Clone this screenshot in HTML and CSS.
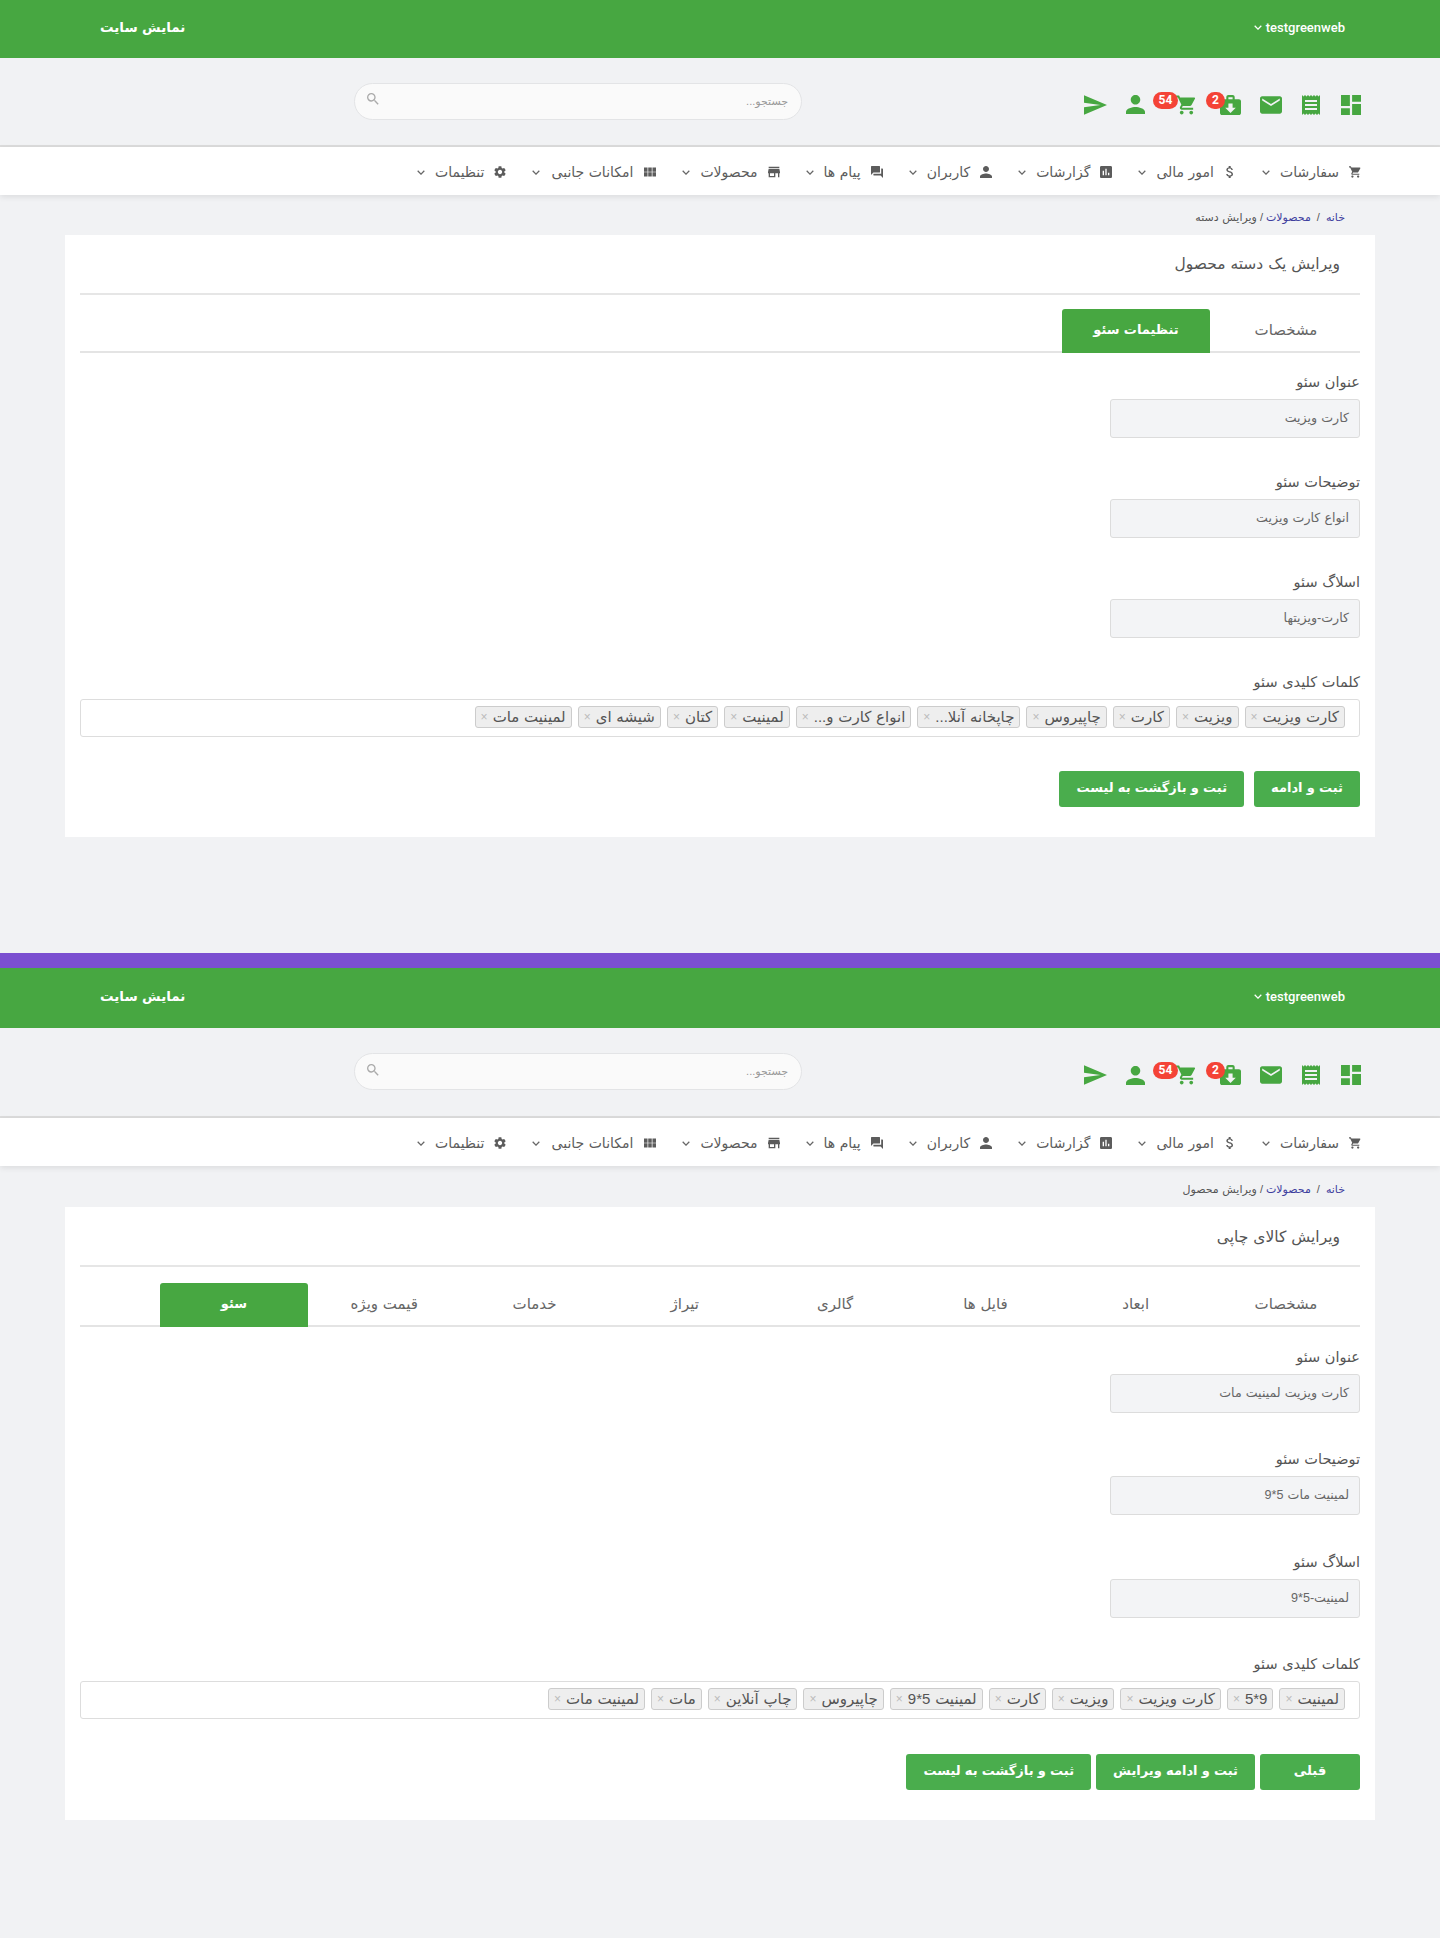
FILE: index.html
```html
<!DOCTYPE html>
<html lang="fa" dir="rtl">
<head>
  <meta charset="UTF-8" />
  <title>ویرایش محصول</title>
  <link rel="stylesheet" href="styles.css">
</head>
<body>
  <svg class="sprite" xmlns="http://www.w3.org/2000/svg">
    <symbol id="i-dashboard" viewBox="3 3 18 18"><path d="M3 13h8V3H3v10zm0 8h8v-6H3v6zm10 0h8V11h-8v10zm0-18v6h8V3h-8z"/></symbol>
    <symbol id="i-receipt" viewBox="3 2 18 20"><path d="M18 17H6v-2h12v2zm0-4H6v-2h12v2zm0-4H6V7h12v2zM3 22l1.5-1.5L6 22l1.5-1.5L9 22l1.5-1.5L12 22l1.5-1.5L15 22l1.5-1.5L18 22l1.5-1.5L21 22V2l-1.5 1.5L18 2l-1.5 1.5L15 2l-1.5 1.5L12 2l-1.5 1.5L9 2 7.5 3.5 6 2 4.5 3.5 3 2v20z"/></symbol>
    <symbol id="i-email" viewBox="2 4 20 16"><path d="M20 4H4c-1.1 0-1.99.9-1.99 2L2 18c0 1.1.9 2 2 2h16c1.1 0 2-.9 2-2V6c0-1.1-.9-2-2-2zm0 4l-8 5-8-5V6l8 5 8-5v2z"/></symbol>
    <symbol id="i-shop" viewBox="2 2 20 19"><path fill-rule="evenodd" d="M20 6h-4V4c0-1.1-.9-2-2-2h-4C8.9 2 8 2.9 8 4v2H4c-1.1 0-2 .9-2 2v11c0 1.1.9 2 2 2h16c1.1 0 2-.9 2-2V8c0-1.1-.9-2-2-2zM10 4h4v2h-4V4zm2 15l-5-5h3v-4h4v4h3l-5 5z"/></symbol>
    <symbol id="i-cart" viewBox="1 2 21 20"><path d="M7 18c-1.1 0-1.99.9-1.99 2S5.9 22 7 22s2-.9 2-2-.9-2-2-2zM1 2v2h2l3.6 7.59-1.35 2.45c-.16.28-.25.61-.25.96 0 1.1.9 2 2 2h12v-2H7.42c-.14 0-.25-.11-.25-.25l.03-.12.9-1.63h7.45c.75 0 1.41-.41 1.75-1.03l3.58-6.49c.08-.14.12-.31.12-.48 0-.55-.45-1-1-1H5.21l-.94-2H1zm16 16c-1.1 0-1.99.9-1.99 2s.89 2 1.99 2 2-.9 2-2-.9-2-2-2z"/></symbol>
    <symbol id="i-person" viewBox="4 4 16 16"><path d="M12 12c2.21 0 4-1.79 4-4s-1.79-4-4-4-4 1.79-4 4 1.79 4 4 4zm0 2c-2.67 0-8 1.34-8 4v2h16v-2c0-2.66-5.33-4-8-4z"/></symbol>
    <symbol id="i-send" viewBox="2 3 21 18"><path d="M2.01 21L23 12 2.01 3 2 10l15 2-15 2z"/></symbol>
    <symbol id="i-money" viewBox="6 3 12 18"><path d="M11.8 10.9c-2.27-.59-3-1.2-3-2.15 0-1.09 1.01-1.85 2.7-1.85 1.78 0 2.44.85 2.5 2.1h2.21c-.07-1.72-1.12-3.3-3.21-3.81V3h-3v2.16c-1.94.42-3.5 1.68-3.5 3.61 0 2.31 1.91 3.46 4.7 4.13 2.5.6 3 1.48 3 2.41 0 .69-.49 1.79-2.7 1.79-2.06 0-2.87-.92-2.98-2.1h-2.2c.12 2.19 1.76 3.42 3.68 3.83V21h3v-2.15c1.95-.37 3.5-1.5 3.5-3.55 0-2.84-2.43-3.81-4.7-4.4z"/></symbol>
    <symbol id="i-chart" viewBox="3 3 18 18"><path d="M19 3H5c-1.1 0-2 .9-2 2v14c0 1.1.9 2 2 2h14c1.1 0 2-.9 2-2V5c0-1.1-.9-2-2-2zM9 17H7v-7h2v7zm4 0h-2V7h2v10zm4 0h-2v-4h2v4z"/></symbol>
    <symbol id="i-forum" viewBox="2 2 20 20"><path d="M21 6h-2v9H6v2c0 .55.45 1 1 1h11l4 4V7c0-.55-.45-1-1-1zm-4 6V3c0-.55-.45-1-1-1H3c-.55 0-1 .45-1 1v14l4-4h10c.55 0 1-.45 1-1z"/></symbol>
    <symbol id="i-store" viewBox="3 4 18 16"><path d="M20 4H4v2h16V4zm1 10v-2l-1-5H4l-1 5v2h1v6h10v-6h4v6h2v-6h1zm-9 4H6v-4h6v4z"/></symbol>
    <symbol id="i-apps" viewBox="4 5 17 13"><path d="M4 11h5V5H4v6zm0 7h5v-6H4v6zm6 0h5v-6h-5v6zm6 0h5v-6h-5v6zm-6-7h5V5h-5v6zm6-6v6h5V5h-5z"/></symbol>
    <symbol id="i-gear" viewBox="2.5 2 19 20"><path d="M19.14 12.94c.04-.3.06-.61.06-.94 0-.32-.02-.64-.07-.94l2.03-1.58a.49.49 0 00.12-.61l-1.92-3.32a.488.488 0 00-.59-.22l-2.39.96c-.5-.38-1.03-.7-1.62-.94l-.36-2.54a.484.484 0 00-.48-.41h-3.84c-.24 0-.43.17-.47.41l-.36 2.54c-.59.24-1.13.57-1.62.94l-2.39-.96c-.22-.08-.47 0-.59.22L2.74 8.87c-.12.21-.08.47.12.61l2.03 1.58c-.05.3-.09.63-.09.94s.02.64.07.94l-2.03 1.58a.49.49 0 00-.12.61l1.92 3.32c.12.22.37.29.59.22l2.39-.96c.5.38 1.03.7 1.62.94l.36 2.54c.05.24.24.41.48.41h3.84c.24 0 .44-.17.47-.41l.36-2.54c.59-.24 1.13-.56 1.62-.94l2.39.96c.22.08.47 0 .59-.22l1.92-3.32c.12-.22.07-.47-.12-.61l-2.01-1.58zM12 15.6c-1.98 0-3.6-1.62-3.6-3.6s1.62-3.6 3.6-3.6 3.6 1.62 3.6 3.6-1.62 3.6-3.6 3.6z"/></symbol>
    <symbol id="i-search" viewBox="3 3 18 18"><path d="M15.5 14h-.79l-.28-.27A6.471 6.471 0 0016 9.5 6.5 6.5 0 109.5 16c1.61 0 3.09-.59 4.23-1.57l.27.28v.79l5 4.99L20.49 19l-4.99-5zm-6 0C7.01 14 5 11.99 5 9.5S7.01 5 9.5 5 14 7.01 14 9.5 11.99 14 9.5 14z"/></symbol>
    <symbol id="i-down" viewBox="6 8 12 8"><path d="M16.59 8.59L12 13.17 7.41 8.59 6 10l6 6 6-6z"/></symbol>
  </svg>

  <section class="panel panel-category">
    <header class="topbar">
      <div class="user"><span>testgreenweb</span><svg class="chev chev-white"><use href="#i-down"/></svg></div>
      <a class="site-link">نمایش سایت</a>
    </header>
    <div class="toolbar">
      <div class="tool-icons">
        <svg class="tool tool-dashboard"><use href="#i-dashboard"/></svg>
        <svg class="tool tool-receipt"><use href="#i-receipt"/></svg>
        <svg class="tool tool-email"><use href="#i-email"/></svg>
        <span class="tool-badged tool-shop"><svg class="tool"><use href="#i-shop"/></svg><b class="badge badge-one">2</b></span>
        <span class="tool-badged tool-cart"><svg class="tool"><use href="#i-cart"/></svg><b class="badge badge-two">54</b></span>
        <svg class="tool tool-person"><use href="#i-person"/></svg>
        <svg class="tool tool-send"><use href="#i-send"/></svg>
      </div>
      <div class="search"><span>جستجو...</span><svg class="search-icon"><use href="#i-search"/></svg></div>
    </div>
    <nav class="nav">
      <a class="nav-item"><svg class="nav-icon"><use href="#i-cart"/></svg>سفارشات<svg class="chev"><use href="#i-down"/></svg></a>
      <a class="nav-item"><svg class="nav-icon"><use href="#i-money"/></svg>امور مالی<svg class="chev"><use href="#i-down"/></svg></a>
      <a class="nav-item"><svg class="nav-icon"><use href="#i-chart"/></svg>گزارشات<svg class="chev"><use href="#i-down"/></svg></a>
      <a class="nav-item"><svg class="nav-icon"><use href="#i-person"/></svg>کاربران<svg class="chev"><use href="#i-down"/></svg></a>
      <a class="nav-item"><svg class="nav-icon"><use href="#i-forum"/></svg>پیام ها<svg class="chev"><use href="#i-down"/></svg></a>
      <a class="nav-item"><svg class="nav-icon"><use href="#i-store"/></svg>محصولات<svg class="chev"><use href="#i-down"/></svg></a>
      <a class="nav-item nav-item-long"><svg class="nav-icon"><use href="#i-apps"/></svg>امکانات جانبی<svg class="chev"><use href="#i-down"/></svg></a>
      <a class="nav-item"><svg class="nav-icon"><use href="#i-gear"/></svg>تنظیمات<svg class="chev"><use href="#i-down"/></svg></a>
    </nav>
    <div class="crumbs"><a>خانه</a><i class="crumb-first">/</i><a>محصولات</a><i>/</i><span>ویرایش دسته</span></div>
    <main class="card">
      <h1 class="card-title">ویرایش یک دسته محصول</h1>
      <div class="tabs">
        <a class="tab">مشخصات</a>
        <a class="tab active">تنظیمات سئو</a>
      </div>
      <div class="field"><label>عنوان سئو</label><div class="input">کارت ویزیت</div></div>
      <div class="field"><label>توضیحات سئو</label><div class="input">انواع کارت ویزیت</div></div>
      <div class="field"><label>اسلاگ سئو</label><div class="input">کارت-ویزیتها</div></div>
      <div class="field field-tags">
        <label>کلمات کلیدی سئو</label>
        <div class="tags">
          <span class="tag">کارت ویزیت<i>×</i></span>
          <span class="tag">ویزیت<i>×</i></span>
          <span class="tag">کارت<i>×</i></span>
          <span class="tag">چاپیروس<i>×</i></span>
          <span class="tag">چاپخانه آنلا...<i>×</i></span>
          <span class="tag">انواع کارت و...<i>×</i></span>
          <span class="tag">لمینیت<i>×</i></span>
          <span class="tag">کتان<i>×</i></span>
          <span class="tag">شیشه ای<i>×</i></span>
          <span class="tag">لمینیت مات<i>×</i></span>
        </div>
      </div>
      <div class="actions">
        <a class="btn">ثبت و ادامه</a>
        <a class="btn">ثبت و بازگشت به لیست</a>
      </div>
    </main>
  </section>

  <div class="band"></div>

  <section class="panel panel-product">
    <header class="topbar">
      <div class="user"><span>testgreenweb</span><svg class="chev chev-white"><use href="#i-down"/></svg></div>
      <a class="site-link">نمایش سایت</a>
    </header>
    <div class="toolbar">
      <div class="tool-icons">
        <svg class="tool tool-dashboard"><use href="#i-dashboard"/></svg>
        <svg class="tool tool-receipt"><use href="#i-receipt"/></svg>
        <svg class="tool tool-email"><use href="#i-email"/></svg>
        <span class="tool-badged tool-shop"><svg class="tool"><use href="#i-shop"/></svg><b class="badge badge-one">2</b></span>
        <span class="tool-badged tool-cart"><svg class="tool"><use href="#i-cart"/></svg><b class="badge badge-two">54</b></span>
        <svg class="tool tool-person"><use href="#i-person"/></svg>
        <svg class="tool tool-send"><use href="#i-send"/></svg>
      </div>
      <div class="search"><span>جستجو...</span><svg class="search-icon"><use href="#i-search"/></svg></div>
    </div>
    <nav class="nav">
      <a class="nav-item"><svg class="nav-icon"><use href="#i-cart"/></svg>سفارشات<svg class="chev"><use href="#i-down"/></svg></a>
      <a class="nav-item"><svg class="nav-icon"><use href="#i-money"/></svg>امور مالی<svg class="chev"><use href="#i-down"/></svg></a>
      <a class="nav-item"><svg class="nav-icon"><use href="#i-chart"/></svg>گزارشات<svg class="chev"><use href="#i-down"/></svg></a>
      <a class="nav-item"><svg class="nav-icon"><use href="#i-person"/></svg>کاربران<svg class="chev"><use href="#i-down"/></svg></a>
      <a class="nav-item"><svg class="nav-icon"><use href="#i-forum"/></svg>پیام ها<svg class="chev"><use href="#i-down"/></svg></a>
      <a class="nav-item"><svg class="nav-icon"><use href="#i-store"/></svg>محصولات<svg class="chev"><use href="#i-down"/></svg></a>
      <a class="nav-item nav-item-long"><svg class="nav-icon"><use href="#i-apps"/></svg>امکانات جانبی<svg class="chev"><use href="#i-down"/></svg></a>
      <a class="nav-item"><svg class="nav-icon"><use href="#i-gear"/></svg>تنظیمات<svg class="chev"><use href="#i-down"/></svg></a>
    </nav>
    <div class="crumbs"><a>خانه</a><i class="crumb-first">/</i><a>محصولات</a><i>/</i><span>ویرایش محصول</span></div>
    <main class="card">
      <h1 class="card-title">ویرایش کالای چاپی</h1>
      <div class="tabs">
        <a class="tab">مشخصات</a>
        <a class="tab">ابعاد</a>
        <a class="tab">فایل ها</a>
        <a class="tab">گالری</a>
        <a class="tab">تیراژ</a>
        <a class="tab">خدمات</a>
        <a class="tab">قیمت ویژه</a>
        <a class="tab active">سئو</a>
      </div>
      <div class="field"><label>عنوان سئو</label><div class="input">کارت ویزیت لمینیت مات</div></div>
      <div class="field"><label>توضیحات سئو</label><div class="input">لمینیت مات 5*9</div></div>
      <div class="field"><label>اسلاگ سئو</label><div class="input">لمینیت-5*9</div></div>
      <div class="field field-tags">
        <label>کلمات کلیدی سئو</label>
        <div class="tags">
          <span class="tag">لمینیت<i>×</i></span>
          <span class="tag">9*5<i>×</i></span>
          <span class="tag">کارت ویزیت<i>×</i></span>
          <span class="tag">ویزیت<i>×</i></span>
          <span class="tag">کارت<i>×</i></span>
          <span class="tag">لمینیت 5*9<i>×</i></span>
          <span class="tag">چاپیروس<i>×</i></span>
          <span class="tag">چاپ آنلاین<i>×</i></span>
          <span class="tag">مات<i>×</i></span>
          <span class="tag">لمینیت مات<i>×</i></span>
        </div>
      </div>
      <div class="actions">
        <a class="btn btn-prev">قبلی</a>
        <a class="btn">ثبت و ادامه ویرایش</a>
        <a class="btn">ثبت و بازگشت به لیست</a>
      </div>
    </main>
  </section>
</body>
</html>
```

FILE: styles.css
```css
* { box-sizing: border-box; }
html, body { margin: 0; padding: 0; }
body {
  width: 1440px;
  font-family: "Liberation Sans", "DejaVu Sans", sans-serif;
  word-spacing: .6px;
  color: #555;
  background: #f1f2f4;
}
.sprite { display: none; }
a { text-decoration: none; }
i { font-style: normal; }

.panel { background: #f1f2f4; }
.panel-category { height: 953px; }
.panel-product { height: 970px; }
.band { height: 15px; background: #7b4fd0; }

/* green top bar */
.topbar {
  height: 58px;
  padding: 0 95px 4px 100px;
  display: flex;
  align-items: center;
  justify-content: space-between;
  background: #47a741;
  color: #fff;
}
.user {
  display: flex;
  align-items: center;
  gap: 4px;
  font-family: Roboto, sans-serif;
  font-size: 13px;
  font-weight: 500;
}
.site-link { font-size: 13.5px; font-weight: bold; color: #fff; }
.chev { width: 8px; height: 5px; fill: #666; flex: none; }
.chev-white { fill: #fff; }

/* icons + search row */
.toolbar {
  height: 89px;
  padding: 0 79px 0 0;
  display: flex;
  align-items: center;
  border-bottom: 2px solid #dcdcdc;
}
.tool-icons {
  width: 277px;
  height: 24px;
  margin-top: 6px;
  display: flex;
  align-items: center;
  gap: 20px;
}
.tool { display: block; width: 20px; height: 20px; fill: #47a741; }
.tool-email { width: 22px; height: 18px; margin-right: -1px; }
.tool-badged { position: relative; display: block; }
.tool-shop { margin-right: -1px; }
.tool-shop .tool { width: 21px; }
.tool-cart { margin-right: 4px; }
.tool-person { margin-right: 11px; width: 19px; height: 19px; }
.tool-send { width: 23px; margin-right: -1px; }
.badge {
  position: absolute;
  top: -3px;
  height: 17px;
  border-radius: 9px;
  background: #f44336;
  color: #fff;
  font: bold 12px/17px Roboto, sans-serif;
  text-align: center;
}
.badge-one { right: 16px; width: 19px; }
.badge-two { right: 18px; width: 25px; }

.search {
  width: 448px;
  height: 37px;
  margin-right: 282px;
  margin-top: -1px;
  padding: 0 13px 0 12px;
  display: flex;
  align-items: center;
  justify-content: space-between;
  background: #fafafa;
  border: 1px solid #e3e4e6;
  border-radius: 19px;
  font-size: 11px;
  color: #999;
}
.search-icon { width: 12px; height: 12px; fill: #aaa; margin-top: -4px; }

/* main menu */
.nav {
  height: 48px;
  padding: 2px 79px 0 0;
  display: flex;
  align-items: center;
  gap: 26px;
  background: #fff;
  box-shadow: 0 2px 6px rgba(0, 0, 0, .09);
  font-size: 14px;
  color: #5c5c5c;
}
.nav-item { display: flex; align-items: center; gap: 10px; color: #5c5c5c; }
.nav-item-long { gap: 11px; }
.nav-icon { width: 12px; height: 12px; fill: #5c5c5c; flex: none; }

.crumbs {
  height: 40px;
  padding: 16px 95px 0 0;
  font-size: 11px;
  line-height: 12px;
  color: #555;
  display: flex;
  gap: 3px;
}
.crumbs a { color: #3f3f9e; }
.crumbs .crumb-first { margin: 0 3px; }

/* white card */
.card {
  width: 1310px;
  margin: 0 65px;
  padding: 0 15px 30px;
  background: #fff;
}
.card-title {
  height: 60px;
  margin: 0 0 14px;
  padding: 20px 20px 0 0;
  border-bottom: 2px solid #e6e6e6;
  font-size: 15.5px;
  line-height: 18px;
  font-weight: normal;
  color: #555;
}
.tabs {
  height: 44px;
  display: flex;
  gap: 2px;
  border-bottom: 2px solid #e4e4e4;
  margin-bottom: 19px;
}
.tab {
  width: 148px;
  height: 44px;
  line-height: 42px;
  text-align: center;
  font-size: 15px;
  color: #666;
}
.tab.active {
  background: #47a741;
  color: #fff;
  font-size: 13px;
  font-weight: bold;
  border-radius: 3px 3px 0 0;
}
.field { margin-bottom: 34px; }
.field label { display: block; height: 20px; margin-bottom: 7px; font-size: 14.5px; line-height: 20px; color: #555; }
.field-tags { margin-bottom: 34px; }
.input {
  width: 250px;
  height: 39px;
  padding: 0 10px;
  line-height: 37px;
  background: #f3f4f6;
  border: 1px solid #dcdcdc;
  border-radius: 3px;
  font-size: 12.6px;
  color: #666;
}
.tags {
  height: 38px;
  margin-top: 3px;
  padding: 6px 14px 0;
  display: flex;
  gap: 6px;
  border: 1px solid #ddd;
  border-radius: 3px;
}
.tag {
  height: 22px;
  padding: 0 5px;
  display: flex;
  align-items: center;
  gap: 5px;
  background: #eee;
  border: 1px solid #ccc;
  border-radius: 3px;
  font-size: 15px;
  color: #555;
}
.tag i { font-size: 12px; color: #bbb; font-family: "Liberation Sans", sans-serif; }
.actions { display: flex; gap: 10px; }
.btn {
  height: 36px;
  padding: 0 17px;
  line-height: 34px;
  background: #4aad4d;
  border-radius: 3px;
  color: #fff;
  font-size: 13px;
  font-weight: bold;
}

/* second screen sits a little lower */
.panel-product .topbar { height: 60px; }
.panel-product .toolbar { height: 90px; }
.panel-product .crumbs { height: 41px; padding-top: 17px; }
.panel-product .card-title { padding-top: 21px; margin-bottom: 16px; }
.panel-product .tabs { gap: 2.3px; margin-bottom: 20px; }
.panel-product .field { margin-bottom: 36.3px; }
.panel-product .tags { margin-top: 0; }
.panel-product .field-tags { margin-bottom: 35px; }
.panel-product .actions { gap: 5px; }
.panel-product .btn-prev { width: 100px; text-align: center; }
```
